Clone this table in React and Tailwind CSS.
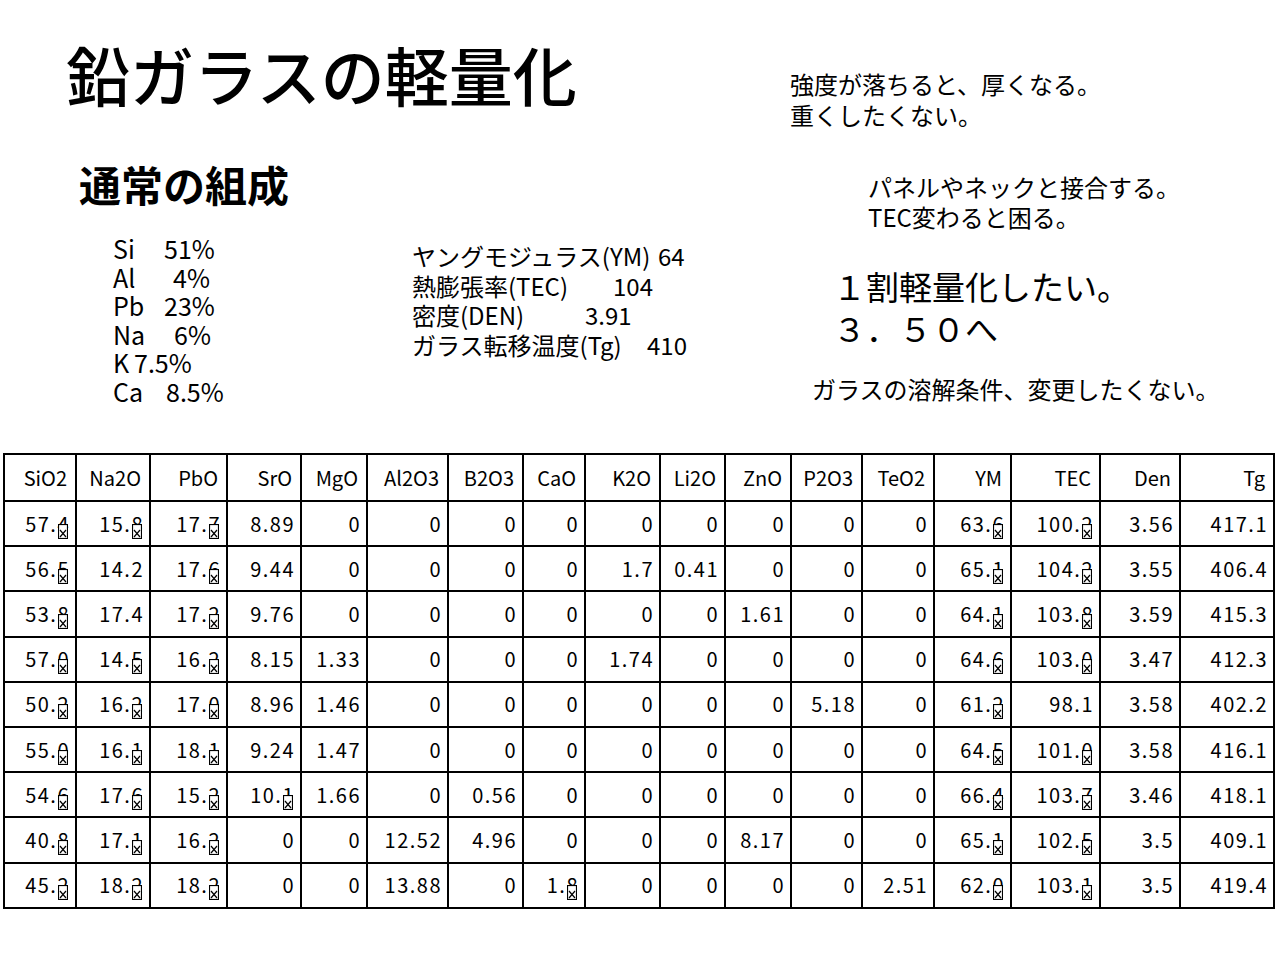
import React from 'react';

const cols = ['SiO2', 'Na2O', 'PbO', 'SrO', 'MgO', 'Al2O3', 'B2O3', 'CaO', 'K2O', 'Li2O', 'ZnO', 'P2O3', 'TeO2', 'YM', 'TEC', 'Den', 'Tg'];

const colWidths = [
  'w-[72px]', 'w-[74px]', 'w-[77px]', 'w-[74px]', 'w-[66px]', 'w-[81px]', 'w-[75px]', 'w-[62px]', 'w-[75px]',
  'w-[65px]', 'w-[66px]', 'w-[71px]', 'w-[72px]', 'w-[77px]', 'w-[89px]', 'w-[80px]', 'w-[94px]',
];

// "*" = last digit shows as a broken glyph box
const rows = [
  ['57.4*', '15.8*', '17.7*', '8.89', '0', '0', '0', '0', '0', '0', '0', '0', '0', '63.6*', '100.2*', '3.56', '417.1'],
  ['56.5*', '14.2', '17.6*', '9.44', '0', '0', '0', '0', '1.7', '0.41', '0', '0', '0', '65.1*', '104.2*', '3.55', '406.4'],
  ['53.8*', '17.4', '17.2*', '9.76', '0', '0', '0', '0', '0', '0', '1.61', '0', '0', '64.1*', '103.8*', '3.59', '415.3'],
  ['57.0*', '14.5*', '16.2*', '8.15', '1.33', '0', '0', '0', '1.74', '0', '0', '0', '0', '64.6*', '103.0*', '3.47', '412.3'],
  ['50.2*', '16.2*', '17.0*', '8.96', '1.46', '0', '0', '0', '0', '0', '0', '5.18', '0', '61.2*', '98.1', '3.58', '402.2'],
  ['55.0*', '16.1*', '18.1*', '9.24', '1.47', '0', '0', '0', '0', '0', '0', '0', '0', '64.5*', '101.0*', '3.58', '416.1'],
  ['54.6*', '17.6*', '15.2*', '10.1*', '1.66', '0', '0.56', '0', '0', '0', '0', '0', '0', '66.4*', '103.7*', '3.46', '418.1'],
  ['40.8*', '17.1*', '16.2*', '0', '0', '12.52', '4.96', '0', '0', '0', '8.17', '0', '0', '65.1*', '102.5*', '3.5', '409.1'],
  ['45.2*', '18.2*', '18.2*', '0', '0', '13.88', '0', '1.8*', '0', '0', '0', '0', '2.51', '62.0*', '103.1*', '3.5', '419.4'],
];

const composition = [
  { el: 'Si', val: '51%', w: 'w-[51px]' },
  { el: 'Al', val: '4%', w: 'w-[60px]' },
  { el: 'Pb', val: '23%', w: 'w-[51px]' },
  { el: 'Na', val: '6%', w: 'w-[61px]' },
  { el: 'K', val: '7.5%', w: 'w-[21px]' },
  { el: 'Ca', val: '8.5%', w: 'w-[53px]' },
];

const props = [
  { label: 'ヤングモジュラス(YM)', val: '64', w: 'w-[246px]' },
  { label: '熱膨張率(TEC)', val: '104', w: 'w-[201px]' },
  { label: '密度(DEN)', val: '3.91', w: 'w-[173px]' },
  { label: 'ガラス転移温度(Tg)', val: '410', w: 'w-[235px]' },
];

const Broken = ({ d }) => (
  <span className="relative inline-block">
    {d}
    <svg className="absolute left-[1px] top-[12px]" width="10" height="15" viewBox="0 0 10 15">
      <rect x="0.5" y="0.5" width="9" height="14" fill="white" stroke="black" strokeWidth="1.2" />
      <path d="M2 6 L8 13 M8 6 L2 13" stroke="black" strokeWidth="1.2" />
    </svg>
  </span>
);

const Value = ({ v }) => {
  if (!v.endsWith('*')) return v;
  const s = v.slice(0, -1);
  return (
    <>
      {s.slice(0, -1)}
      <Broken d={s.slice(-1)} />
    </>
  );
};

const App = () => {
  return (
    <div className="w-[1280px] h-[960px] bg-white text-black font-['Noto_Sans_CJK_JP',sans-serif] overflow-hidden">
      {/* heading row */}
      <div className="flex items-start h-[130px]">
        <h1 className="ml-[66px] mt-[41px] w-[724px] text-[64px] leading-none font-medium">鉛ガラスの軽量化</h1>
        <div className="mt-[68px] text-[24px] leading-[31px]">
          <p>強度が落ちると、厚くなる。</p>
          <p>重くしたくない。</p>
        </div>
      </div>

      {/* notes */}
      <div className="flex items-start h-[323px]">
        <div className="w-[412px]">
          <h2 className="ml-[79px] mt-[33px] text-[42px] leading-none font-bold">通常の組成</h2>
          <div className="ml-[113px] mt-[29px] text-[25px] leading-[28.6px]">
            {composition.map((c) => (
              <div key={c.el} className="flex">
                <span className={c.w}>{c.el}</span>
                <span>{c.val}</span>
              </div>
            ))}
          </div>
        </div>

        <div className="w-[400px] mt-[111px] text-[24px] leading-[29.7px]">
          {props.map((p) => (
            <div key={p.label} className="flex">
              <span className={p.w}>{p.label}</span>
              <span>{p.val}</span>
            </div>
          ))}
        </div>

        <div className="flex-1">
          <div className="ml-[56px] mt-[42px] text-[24px] leading-[30px]">
            <p>パネルやネックと接合する。</p>
            <p>TEC変わると困る。</p>
          </div>
          <div className="ml-[21px] mt-[33px] text-[33px] leading-[42px]">
            <p>１割軽量化したい。</p>
            <p>３．５０へ</p>
          </div>
          <p className="mt-[25px] text-[24px] leading-[30px]">ガラスの溶解条件、変更したくない。</p>
        </div>
      </div>

      {/* data table */}
      <table className="ml-[3px] w-[1270px] table-fixed border-collapse text-[20px] leading-[24px]">
        <colgroup>
          {colWidths.map((w, i) => (
            <col key={i} className={w} />
          ))}
        </colgroup>
        <thead>
          <tr className="h-[47px]">
            {cols.map((c) => (
              <th key={c} className="border-2 border-black pr-[8px] text-right align-middle font-normal">
                {c}
              </th>
            ))}
          </tr>
        </thead>
        <tbody>
          {rows.map((r, i) => (
            <tr key={i} className="h-[45.2px]">
              {r.map((v, j) => (
                <td key={j} className="border-2 border-black pr-[5px] text-right align-middle tracking-[1.5px] whitespace-nowrap">
                  <Value v={v} />
                </td>
              ))}
            </tr>
          ))}
        </tbody>
      </table>
    </div>
  );
};

export default App;
